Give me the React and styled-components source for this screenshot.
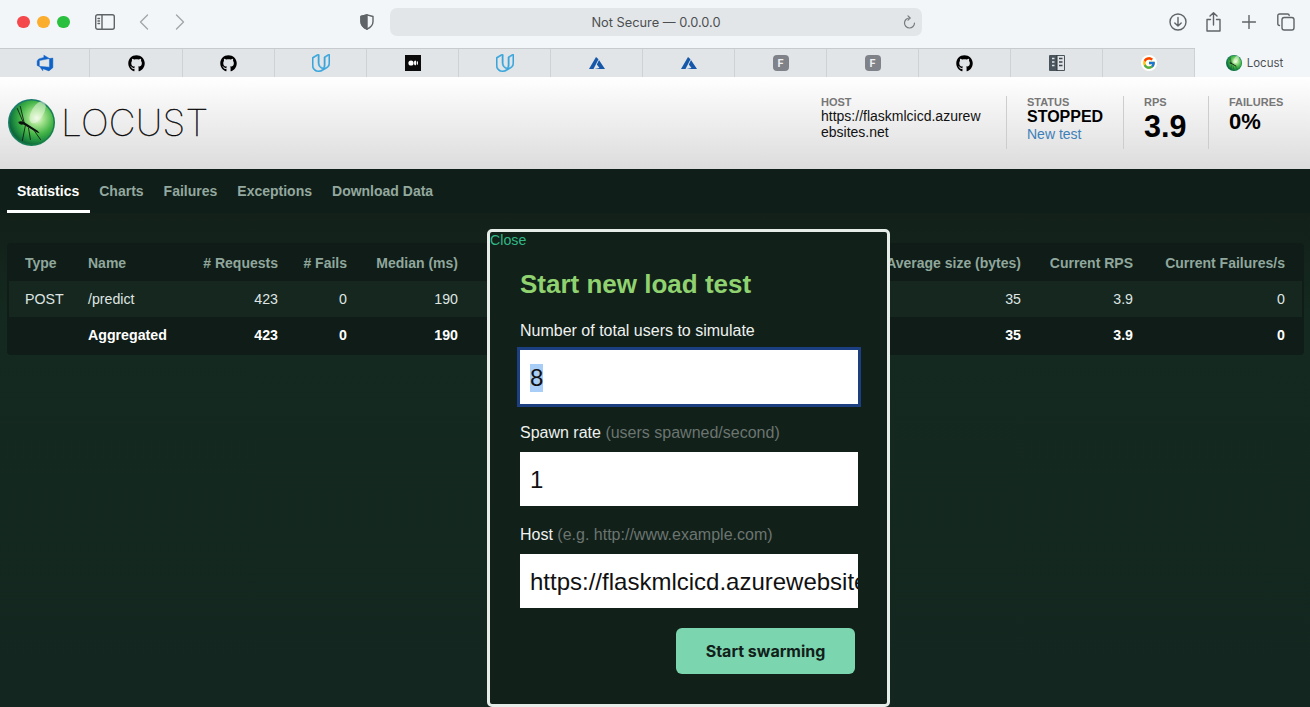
import React, { useEffect, useRef } from "react";
import styled, { createGlobalStyle } from "styled-components";
import { FaGithub } from "react-icons/fa";
import { FcGoogle } from "react-icons/fc";
import { SiUdacity } from "react-icons/si";
import { VscAzureDevops } from "react-icons/vsc";

const GlobalStyle = createGlobalStyle`
  html, body {
    margin: 0;
    padding: 0;
    background: #132720;
  }
  * {
    box-sizing: border-box;
  }
`;

const Page = styled.div`
  position: relative;
  width: 1310px;
  height: 707px;
  overflow: hidden;
  font-family: "Liberation Sans", Arial, sans-serif;
`;

/* safari chrome */
const Toolbar = styled.div`
  display: flex;
  align-items: center;
  height: 48px;
  background: #f3f6f9;
  padding: 0 0 4px 17px;
`;

const Light = styled.span`
  width: 12.5px;
  height: 12.5px;
  border-radius: 50%;
  margin-right: 7.5px;
  background: ${(p) => p.$color};
`;

const ChromeIcon = styled.svg`
  flex: none;
  margin-left: ${(p) => p.$left || 0}px;
  fill: none;
  stroke: ${(p) => p.$stroke || "#5f6468"};
  stroke-width: 1.4;
  stroke-linecap: round;
  stroke-linejoin: round;
`;

const AddressBar = styled.div`
  position: relative;
  display: flex;
  align-items: center;
  justify-content: center;
  width: 532px;
  height: 28px;
  margin-left: 16px;
  border-radius: 7px;
  background: #e3e6e8;
  color: #4c4f52;
  font: 12.8px "Inter", sans-serif;
`;

const Reload = styled.svg`
  position: absolute;
  right: 6px;
  top: 7px;
  fill: none;
  stroke: #777b7e;
  stroke-width: 1.2;
  stroke-linecap: round;
`;

const Favorites = styled.div`
  display: flex;
  height: 29px;
  border-top: 1px solid #c8cbcd;
  background: #e2e5e7;
`;

const FavCell = styled.div`
  flex: none;
  display: flex;
  align-items: center;
  justify-content: center;
  width: ${(p) => p.$width || 92}px;
  border-right: 1px solid #cfd2d4;
  color: ${(p) => p.$color || "#000"};
  font-size: ${(p) => p.$size || 17}px;

  svg {
    stroke-width: ${(p) => p.$weight || 0};
  }
`;

const FavActive = styled.div`
  flex: 1;
  display: flex;
  align-items: center;
  justify-content: center;
  gap: 5px;
  margin-top: -1px;
  padding-left: 4px;
  background: #f3f6f9;
  color: #4c4f52;
  font: 11.5px "Inter", sans-serif;
`;

const LetterIcon = styled.span`
  display: flex;
  align-items: center;
  justify-content: center;
  width: 16px;
  height: 16px;
  border-radius: 4px;
  background: #7f8389;
  color: #eef0f2;
  font: bold 10.5px "Inter", sans-serif;
`;

const GoogleBadge = styled.span`
  display: flex;
  align-items: center;
  justify-content: center;
  width: 16px;
  height: 16px;
  border-radius: 50%;
  background: #fff;
  font-size: 14px;
`;

/* locust header */
const Header = styled.header`
  display: flex;
  justify-content: space-between;
  height: 92px;
  background: linear-gradient(#ffffff, #dcdcdc);
`;

const Brand = styled.div`
  display: flex;
  align-items: center;
  padding: 0 0 2px 8px;
  gap: 6px;
`;

const Wordmark = styled.span`
  font: 100 37px "Inter", sans-serif;
  letter-spacing: 0.2px;
  color: #000;
  -webkit-text-stroke: 0.4px #000;
`;

const Stats = styled.div`
  display: flex;
  align-items: flex-start;
  padding-top: 19px;
`;

const Stat = styled.div`
  width: ${(p) => p.$width}px;
  height: 53px;
  padding-left: ${(p) => p.$pad ?? 20}px;
  border-left: ${(p) => (p.$first ? "none" : "1px solid #cdcdcd")};
`;

const StatLabel = styled.div`
  font-size: 11px;
  line-height: 13px;
  font-weight: bold;
  color: #777;
`;

const HostValue = styled.div`
  width: 162px;
  margin-top: -1px;
  font-size: 14px;
  line-height: 16px;
  color: #111;
  word-break: break-all;
`;

const StatusValue = styled.div`
  font-size: 16px;
  line-height: 16px;
  font-weight: bold;
  color: #000;
`;

const NewTest = styled.a`
  display: block;
  margin-top: 1px;
  font-size: 14px;
  line-height: 16px;
  color: #3d80b8;
`;

const BigValue = styled.div`
  font-size: ${(p) => p.$size}px;
  line-height: ${(p) => p.$size}px;
  margin-top: ${(p) => p.$top}px;
  font-weight: bold;
  color: #000;
`;

/* nav tabs */
const Nav = styled.nav`
  display: flex;
  height: 44px;
  padding-left: 7px;
  background: #101e19;
`;

const Tab = styled.a`
  padding: 14px ${(p) => (p.$active ? 11 : 10)}px 0 10px;
  margin-right: ${(p) => (p.$active ? -1 : 0)}px;
  font-size: 14px;
  line-height: 17px;
  font-weight: bold;
  color: ${(p) => (p.$active ? "#fff" : "#93a89e")};
  border-bottom: 3px solid ${(p) => (p.$active ? "#fff" : "transparent")};
`;

/* stats table */
const Main = styled.main`
  height: 494px;
  padding: 30px 6px 0 7px;
  background: linear-gradient(#122019, #14291f 100px, #132720);
`;

const Table = styled.div`
  height: 112px;
  padding: 0 2px;
  border-radius: 4px;
  background: #101c17;
  color: #dfe5e2;
`;

const Row = styled.div`
  display: grid;
  grid-template-columns: 63px 100px 90px 69px 111px 418px 145px 112px 152px;
  align-items: center;
  height: ${(p) => p.$height}px;
  padding-left: 16px;
  padding-top: ${(p) => (p.$head ? 1 : 0)}px;
  background: ${(p) => p.$bg || "transparent"};
  color: ${(p) => p.$color || "inherit"};
  font-size: ${(p) => (p.$head ? 14 : 14.2)}px;
  font-weight: ${(p) => (p.$bold ? "bold" : "normal")};
`;

const Cell = styled.div`
  text-align: ${(p) => (p.$left ? "left" : "right")};
  white-space: nowrap;
`;

/* modal */
const Modal = styled.section`
  position: absolute;
  left: 487px;
  top: 229px;
  width: 403px;
  height: 478px;
  border: 3px solid #e6ece8;
  border-radius: 5px;
  background: #12201a;
  padding: 0 0 0 30px;
`;

const Close = styled.a`
  position: absolute;
  left: 0;
  top: 0;
  font-size: 14.2px;
  line-height: 16px;
  color: #2fb886;
`;

const Title = styled.h2`
  margin: 36.5px 0 0;
  font-size: 26px;
  line-height: 30px;
  font-weight: bold;
  color: #8fd26f;
`;

const Label = styled.label`
  display: block;
  margin-top: ${(p) => p.$top}px;
  font-size: 16px;
  line-height: 20px;
  color: #eef2ef;
`;

const Hint = styled.span`
  color: #6b7570;
`;

const Input = styled.input`
  display: block;
  width: 338px;
  height: 54px;
  margin-top: 9px;
  padding: 2px 0 0 10px;
  border: 0;
  border-radius: 0;
  outline: none;
  background: #fff;
  color: #111;
  font: 24px "Liberation Sans", Arial, sans-serif;

  &:focus {
    box-shadow: 0 0 0 3px #1b3f80;
  }
  &::selection {
    background: #a8cdf7;
  }
`;

const Actions = styled.div`
  display: flex;
  justify-content: flex-end;
  width: 335px;
  margin-top: 20px;
`;

const Swarm = styled.button`
  width: 179px;
  height: 46px;
  border: 0;
  border-radius: 6px;
  background: #7bd5ae;
  color: #12201a;
  font: 700 16px "Inter", sans-serif;
`;

const GITHUB = <FaGithub />;

const LocustLogo = ({ size, id }) => (
  <svg width={size} height={size} viewBox="0 0 46 46" style={{ flex: "none" }}>
    <defs>
      <radialGradient id={`${id}-ball`} cx="0.62" cy="0.4" r="0.62">
        <stop offset="0" stopColor="#f6fcef" />
        <stop offset="0.25" stopColor="#a5e38e" />
        <stop offset="0.6" stopColor="#45b548" />
        <stop offset="0.85" stopColor="#1f8d3f" />
        <stop offset="1" stopColor="#0f6a3a" />
      </radialGradient>
      <linearGradient id={`${id}-rim`} x1="0" y1="0" x2="1" y2="1">
        <stop offset="0" stopColor="#1c7a7a" />
        <stop offset="1" stopColor="#15803f" />
      </linearGradient>
    </defs>
    <circle cx="23" cy="23" r="23" fill={`url(#${id}-rim)`} />
    <circle cx="23" cy="23" r="21.5" fill={`url(#${id}-ball)`} />
    <ellipse cx="29" cy="13" rx="6" ry="12" fill="#eef9e6" opacity="0.5" transform="rotate(30 29 13)" />
    <path d="M10 22.500c2-1.200 4-.8 6 .2l13 8.300 2 2.500-3-1-13-7.500c-2.500.5-4-.3-5-2.500z" fill="#0c120e" />
    <path
      d="M15 23L9 9M16 24L12 7M17 26l-3 15M20 28l2 12M25 30l7 10"
      fill="none"
      stroke="#0c120e"
      strokeWidth="0.8"
    />
  </svg>
);

const MediumIcon = () => (
  <svg width="16" height="16" viewBox="0 0 16 16">
    <rect width="16" height="16" fill="#0b0b0b" />
    <ellipse cx="6" cy="8" rx="2.6" ry="2.6" fill="#fff" />
    <ellipse cx="10.200" cy="8" rx="1.200" ry="2.400" fill="#fff" />
    <ellipse cx="12.500" cy="8" rx="0.500" ry="2.100" fill="#fff" />
  </svg>
);

const BookIcon = () => (
  <svg width="16" height="16" viewBox="0 0 16 16">
    <rect width="16" height="16" rx="1" fill="#49545c" />
    <rect x="8" y="1" width="7" height="14" fill="#dfe3e6" />
    <rect x="7.500" y="0" width="1" height="16" fill="#2e363c" />
    <path d="M3 3.500h2.500M3 7h2.500M3 10.500h2.500" stroke="#dfe3e6" strokeWidth="1.500" />
    <path d="M10 3.500h3.500M10 7h3.500M10 10.500h3.500" stroke="#3b454c" strokeWidth="1.500" />
  </svg>
);

const AzureIcon = () => (
  <svg width="16" height="12" viewBox="0 0 16 12" fill="#1557a8">
    <path d="M7 0L0 12h4.500L9.500 2.200z" />
    <path d="M10 3l6 9H5.500l5-1L7.800 7.500z" />
  </svg>
);

const LoadTestModal = () => {
  const usersRef = useRef(null);

  useEffect(() => {
    usersRef.current.focus();
    usersRef.current.select();
  }, []);

  return (
    <Modal>
      <Close>Close</Close>
      <Title>Start new load test</Title>
      <Label $top={22}>Number of total users to simulate</Label>
      <Input ref={usersRef} defaultValue="8" />
      <Label $top={19}>
        Spawn rate <Hint>(users spawned/second)</Hint>
      </Label>
      <Input defaultValue="1" readOnly />
      <Label $top={19}>
        Host <Hint>(e.g. http://www.example.com)</Hint>
      </Label>
      <Input defaultValue="https://flaskmlcicd.azurewebsites.net" readOnly />
      <Actions>
        <Swarm>Start swarming</Swarm>
      </Actions>
    </Modal>
  );
};

const App = () => (
  <Page>
    <GlobalStyle />
    <Toolbar>
      <Light $color="#f5484c" />
      <Light $color="#fbae2e" />
      <Light $color="#2ac03f" />
      <ChromeIcon $left={18} width="20" height="16" viewBox="0 0 20 16">
        <rect x="0.7" y="0.7" width="18.600" height="14.600" rx="2" />
        <path d="M7 1v14M3 4.500h1.500M3 7h1.500M3 9.500h1.500" />
      </ChromeIcon>
      <ChromeIcon $left={24} $stroke="#a2a6a9" width="10" height="16" viewBox="0 0 10 16">
        <path d="M8.500 1L1.500 8l7 7" />
      </ChromeIcon>
      <ChromeIcon $left={26} $stroke="#a2a6a9" width="10" height="16" viewBox="0 0 10 16">
        <path d="M1.500 1l7 7-7 7" />
      </ChromeIcon>
      <ChromeIcon $left={175} width="14" height="16" viewBox="0 0 14 16">
        <path d="M7 .8L1 2.500v5c0 3.500 2.500 6 6 7.700 3.500-1.700 6-4.200 6-7.700v-5z" />
        <path d="M7 .8L1 2.500v5c0 3.500 2.500 6 6 7.700z" fill="#5f6468" />
      </ChromeIcon>
      <AddressBar>
        Not Secure — 0.0.0.0
        <Reload width="14" height="15" viewBox="0 0 14 15">
          <path d="M7.500 3a5 5 0 1 0 5 5" />
          <path d="M6 .8L8.200 3 6 5.200" />
        </Reload>
      </AddressBar>
      <ChromeIcon $left={247} width="18" height="18" viewBox="0 0 18 18">
        <circle cx="9" cy="9" r="8" />
        <path d="M9 4.500v8.500M5.800 10L9 13l3.200-3" />
      </ChromeIcon>
      <ChromeIcon $left={19} width="15" height="20" viewBox="0 0 15 20">
        <path d="M7.500 13V1M4 4l3.500-3.300L11 4M4.500 7.500H1v11.500h13V7.500h-3.500" />
      </ChromeIcon>
      <ChromeIcon $left={21} width="14" height="14" viewBox="0 0 14 14">
        <path d="M7 .5v13M.5 7h13" />
      </ChromeIcon>
      <ChromeIcon $left={21} width="18" height="18" viewBox="0 0 18 18">
        <path d="M2.500 12.500c-1 0-1.700-.7-1.700-1.700V2.800C.8 1.600 1.500 1 2.500 1h8c1 0 1.700.6 1.700 1.500" />
        <rect x="5" y="4.500" width="12" height="12.500" rx="2.200" />
      </ChromeIcon>
    </Toolbar>
    <Favorites>
      <FavCell $width={90} $color="#0f62c8" $size={18} $weight={0.4}><VscAzureDevops /></FavCell>
      <FavCell $width={93}>{GITHUB}</FavCell>
      <FavCell>{GITHUB}</FavCell>
      <FavCell $color="#3aa6dc" $size={18} $weight={0.8}><SiUdacity /></FavCell>
      <FavCell><MediumIcon /></FavCell>
      <FavCell $color="#3aa6dc" $size={18} $weight={0.8}><SiUdacity /></FavCell>
      <FavCell><AzureIcon /></FavCell>
      <FavCell><AzureIcon /></FavCell>
      <FavCell><LetterIcon>F</LetterIcon></FavCell>
      <FavCell><LetterIcon>F</LetterIcon></FavCell>
      <FavCell>{GITHUB}</FavCell>
      <FavCell><BookIcon /></FavCell>
      <FavCell><GoogleBadge><FcGoogle /></GoogleBadge></FavCell>
      <FavActive>
        <LocustLogo size={16} id="tab" />
        Locust
      </FavActive>
    </Favorites>
    <Header>
      <Brand>
        <LocustLogo size={47} id="brand" />
        <Wordmark>LOCUST</Wordmark>
      </Brand>
      <Stats>
        <Stat $first $pad={0} $width={185}>
          <StatLabel>HOST</StatLabel>
          <HostValue>https://flaskmlcicd.azurewebsites.net</HostValue>
        </Stat>
        <Stat $width={117}>
          <StatLabel>STATUS</StatLabel>
          <StatusValue>STOPPED</StatusValue>
          <NewTest>New test</NewTest>
        </Stat>
        <Stat $width={85}>
          <StatLabel>RPS</StatLabel>
          <BigValue $size={30.5} $top={2}>3.9</BigValue>
        </Stat>
        <Stat $width={102}>
          <StatLabel>FAILURES</StatLabel>
          <BigValue $size={22} $top={2}>0%</BigValue>
        </Stat>
      </Stats>
    </Header>
    <Nav>
      <Tab $active>Statistics</Tab>
      <Tab>Charts</Tab>
      <Tab>Failures</Tab>
      <Tab>Exceptions</Tab>
      <Tab>Download Data</Tab>
    </Nav>
    <Main>
      <Table>
        <Row $height={38} $head $bold $color="#8fa79c">
          <Cell $left>Type</Cell>
          <Cell $left>Name</Cell>
          <Cell># Requests</Cell>
          <Cell># Fails</Cell>
          <Cell>Median (ms)</Cell>
          <Cell />
          <Cell>Average size (bytes)</Cell>
          <Cell>Current RPS</Cell>
          <Cell>Current Failures/s</Cell>
        </Row>
        <Row $height={36} $bg="#16271f">
          <Cell $left>POST</Cell>
          <Cell $left>/predict</Cell>
          <Cell>423</Cell>
          <Cell>0</Cell>
          <Cell>190</Cell>
          <Cell />
          <Cell>35</Cell>
          <Cell>3.9</Cell>
          <Cell>0</Cell>
        </Row>
        <Row $height={36} $bold $color="#fff">
          <Cell $left />
          <Cell $left>Aggregated</Cell>
          <Cell>423</Cell>
          <Cell>0</Cell>
          <Cell>190</Cell>
          <Cell />
          <Cell>35</Cell>
          <Cell>3.9</Cell>
          <Cell>0</Cell>
        </Row>
      </Table>
    </Main>
    <LoadTestModal />
  </Page>
);

export default App;
